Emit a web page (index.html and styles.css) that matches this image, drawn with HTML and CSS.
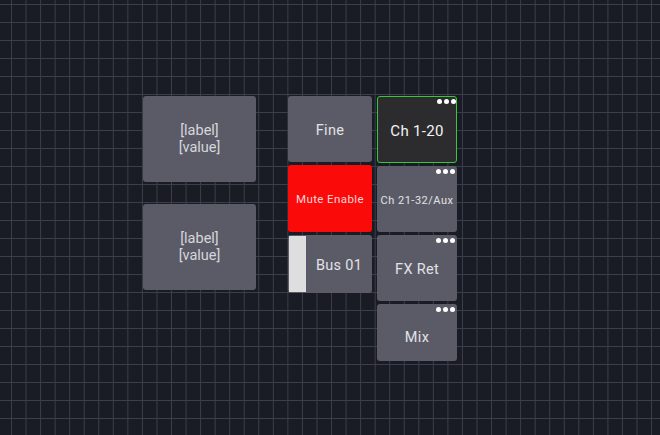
FILE: index.html
```html
<!DOCTYPE html>
<html lang="en">
<head>
    <meta charset="UTF-8">
    <meta name="viewport" content="width=device-width, initial-scale=1.0">
    <title>Surface Layout</title>
    <link rel="stylesheet" href="styles.css">
</head>
<body>
    <main class="canvas">
        <div class="col col-labels">
            <div class="tile tile-label">[label]<br>[value]</div>
            <div class="tile tile-label">[label]<br>[value]</div>
        </div>

        <div class="col col-buttons">
            <div class="tile tile-btn">Fine</div>
            <div class="tile tile-btn tile-mute">Mute Enable</div>
            <div class="tile tile-btn tile-bus">
                <span class="bus-strip"></span>
                <span class="bus-name">Bus 01</span>
            </div>
        </div>

        <div class="col col-banks">
            <div class="tile tile-bank active">Ch 1-20<span class="dots"><i></i><i></i><i></i></span></div>
            <div class="tile tile-bank small">Ch 21-32/Aux<span class="dots"><i></i><i></i><i></i></span></div>
            <div class="tile tile-bank">FX Ret<span class="dots"><i></i><i></i><i></i></span></div>
            <div class="tile tile-bank short">Mix<span class="dots"><i></i><i></i><i></i></span></div>
        </div>
    </main>
</body>
</html>
```

FILE: styles.css
```css
body {
    margin: 0;
    padding: 0;
    width: 660px;
    height: 435px;
    overflow: hidden;
    font-family: 'Roboto', 'Liberation Sans', sans-serif;
    background-color: #191c24;
    background-image:
        linear-gradient(to right, #3a3f4a 1px, transparent 1px),
        linear-gradient(to bottom, #3a3f4a 1px, transparent 1px);
    background-size: 14.55px 18px;
    background-position: 11px 4px;
}

.canvas {
    display: flex;
    align-items: flex-start;
    padding: 96px 0 0 143px;
}

.col {
    display: flex;
    flex-direction: column;
}

.col-labels {
    gap: 22px;
    margin-right: 32px;
}

.col-buttons {
    gap: 3px;
    margin-right: 5px;
}

.col-banks {
    gap: 3px;
}

.tile {
    position: relative;
    box-sizing: border-box;
    background-color: #5b5b67;
    border-radius: 3px;
    display: flex;
    align-items: center;
    justify-content: center;
    text-align: center;
    color: #e2e2e6;
    letter-spacing: 0.3px;
}

.tile-label {
    width: 113px;
    height: 86px;
    font-size: 14.5px;
    line-height: 17px;
    color: #d6d6dc;
    letter-spacing: 0;
}

.tile-btn {
    width: 84px;
    height: 66px;
    font-size: 14.5px;
    padding-top: 2px;
}

.tile-mute {
    height: 67px;
    padding-top: 0;
    background-color: #fb0a0a;
    color: #f3d6d6;
    font-size: 11.5px;
    letter-spacing: 0.4px;
}

.tile-bus {
    height: 58px;
    justify-content: flex-start;
    overflow: hidden;
    padding-top: 0;
}

.bus-strip {
    align-self: stretch;
    width: 17px;
    margin: 1px 0 1px 1px;
    background-color: #dedede;
}

.bus-name {
    flex: 1;
    padding-top: 3px;
}

.tile-bank {
    width: 80px;
    height: 66px;
    font-size: 14.5px;
    padding-top: 2px;
}

.tile-bank.active {
    height: 67px;
    background-color: #2c2c2f;
    border: 1.5px solid #35c93a;
    color: #f4f4f4;
    font-size: 15px;
}

.tile-bank.small {
    font-size: 11px;
    letter-spacing: 0.5px;
}

.tile-bank.short {
    height: 57px;
    padding-top: 10px;
}

.dots {
    position: absolute;
    top: 3px;
    right: 2px;
    display: flex;
    gap: 2px;
}

.tile-bank.active .dots {
    top: 1.5px;
    right: 0.5px;
}

.dots i {
    width: 5px;
    height: 5px;
    border-radius: 50%;
    background-color: #ffffff;
}
```
